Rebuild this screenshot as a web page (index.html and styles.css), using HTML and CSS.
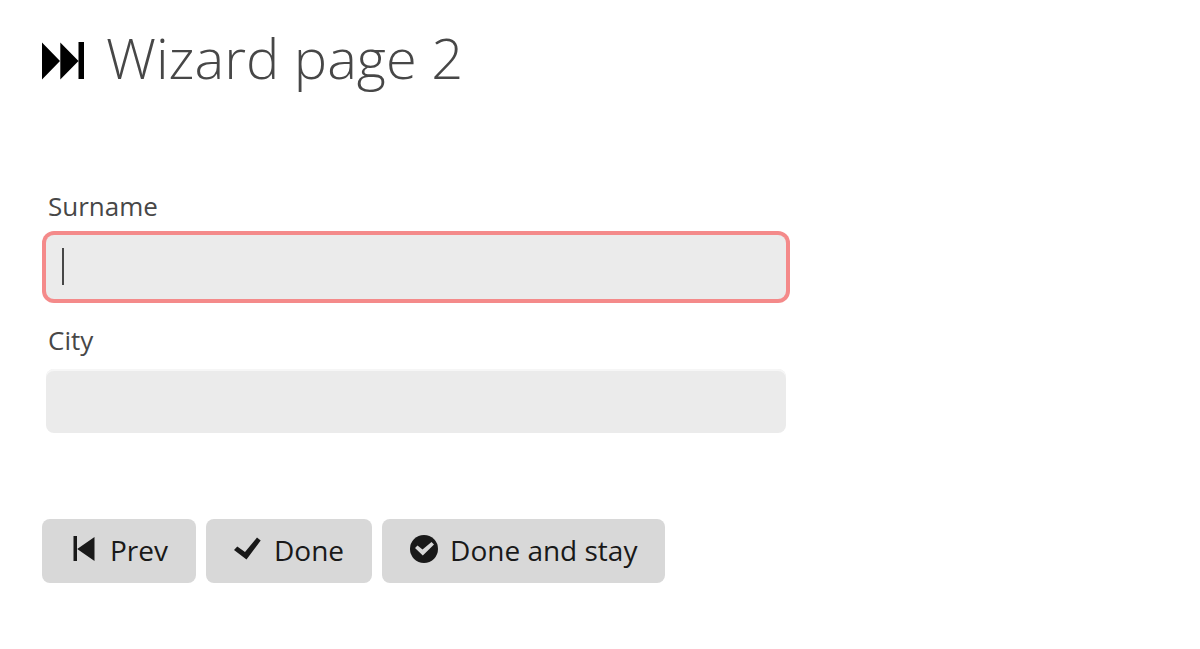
FILE: index.html
```html
<!DOCTYPE html>
<html lang="en">
<head>
<meta charset="utf-8">
<title>Wizard page 2</title>
<link rel="stylesheet" href="styles.css">
</head>
<body>
<main class="wizard">
  <header class="wizard-header">
    <svg class="title-icon" width="42" height="38" viewBox="0 0 42 38" aria-hidden="true"><path d="M0 0.500L18 19L0 37.500ZM18.300 0.500L36.500 19L18.300 37.500ZM36.500 0H42V37H36.500Z"/></svg>
    <h1 class="title">Wizard page 2</h1>
  </header>
  <form class="form">
    <div class="field">
      <label class="label" for="surname">Surname</label>
      <input class="input input-active" id="surname" type="text">
    </div>
    <div class="field">
      <label class="label" for="city">City</label>
      <input class="input" id="city" type="text">
    </div>
    <div class="actions">
      <button class="button" type="button">
        <svg class="icon" width="28" height="28" viewBox="0 0 28 28" aria-hidden="true"><path d="M3.500 1H7V26H3.500ZM24.500 2V26L7.200 14Z"/></svg>
        Prev
      </button>
      <button class="button" type="button">
        <svg class="icon" width="28" height="28" viewBox="0 0 28 28" aria-hidden="true"><path d="M0 15L3.300 11.500L11 17L23 2.500L26.700 5.500L12.500 24.500Z"/></svg>
        Done
      </button>
      <button class="button" type="button">
        <svg class="icon" width="28" height="28" viewBox="0 0 28 28" aria-hidden="true"><circle cx="14" cy="14" r="14"/><path class="icon-mark" d="M5 13L7.500 10.500L12.500 14.500L21.500 7L24 9.500L12.800 20.500Z"/></svg>
        Done and stay
      </button>
    </div>
  </form>
</main>
</body>
</html>
```
FILE: styles.css
```css
* {
  box-sizing: border-box;
}

body {
  margin: 0;
  background: #fff;
  color: #474747;
  font-family: "Open Sans", sans-serif;
}

.wizard {
  padding: 20px 42px;
}

.wizard-header {
  display: flex;
  align-items: center;
  gap: 22px;
}

.title-icon {
  margin-top: 8px;
}

.title {
  margin: 0;
  font-size: 56px;
  font-weight: 300;
  line-height: 74px;
}

.form {
  max-width: 748px;
  margin-top: 94px;
}

.field {
  display: flex;
  flex-direction: column;
  gap: 11px;
  padding: 0 4px;
  margin-bottom: 23px;
}

.label {
  padding-left: 2px;
  font-size: 26px;
  line-height: 36px;
}

.input {
  width: 100%;
  height: 64px;
  padding: 12px 16px;
  border: 0;
  border-radius: 8px;
  outline: 0;
  background: #ebebeb;
  box-shadow: inset 0 2px 0 #f6f6f6;
  color: #474747;
  font: inherit;
  font-size: 28px;
}

.input-active {
  background: linear-gradient(#474747, #474747) 16px 13px / 2px 37px no-repeat #ebebeb;
  box-shadow: 0 0 0 4px #f48a8a;
  caret-color: transparent;
}

.actions {
  display: flex;
  flex-wrap: wrap;
  gap: 10px;
  margin-top: 86px;
}

.button {
  display: flex;
  align-items: center;
  gap: 12px;
  height: 64px;
  padding: 0 28px 2px;
  border: 0;
  border-radius: 8px;
  background: #d8d8d8;
  color: #191919;
  font: 400 28px/40px "Open Sans", sans-serif;
}

.icon {
  margin-bottom: 2px;
  fill: #191919;
}

.icon-mark {
  fill: #d8d8d8;
}
```
